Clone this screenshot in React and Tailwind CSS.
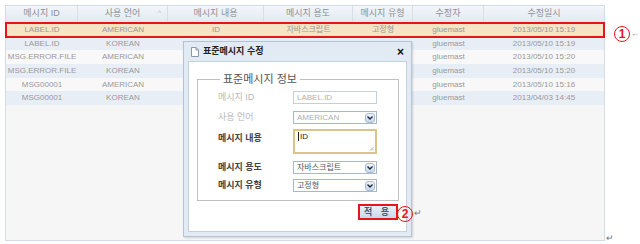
// App.jsx — 표준메시지 관리 화면 (그리드 + 수정 팝업)

import React from 'react';

const FONT = "font-['Liberation_Sans','Noto_Sans_CJK_KR',sans-serif]";

const cols = [
  { key: 'id', title: '메시지 ID', w: 'w-[72px]' },
  { key: 'lang', title: '사용 언어', w: 'w-[90px]', sort: true },
  { key: 'text', title: '메시지 내용', w: 'w-[96px]' },
  { key: 'use', title: '메시지 용도', w: 'w-[89px]' },
  { key: 'type', title: '메시지 유형', w: 'w-[60px]' },
  { key: 'user', title: '수정자', w: 'w-[71px]' },
  { key: 'date', title: '수정일시', w: 'w-[120px]' }
];

const rows = [
  { id: 'LABEL.ID', lang: 'AMERICAN', text: 'ID', use: '자바스크립트', type: '고정형', user: 'gluemast', date: '2013/05/10 15:19' },
  { id: 'LABEL.ID', lang: 'KOREAN', text: '', use: '', type: '', user: 'gluemast', date: '2013/05/10 15:19' },
  { id: 'MSG.ERROR.FILE', lang: 'AMERICAN', text: '', use: '', type: '', user: 'gluemast', date: '2013/05/10 15:20' },
  { id: 'MSG.ERROR.FILE', lang: 'KOREAN', text: '', use: '', type: '', user: 'gluemast', date: '2013/05/10 15:20' },
  { id: 'MSG00001', lang: 'AMERICAN', text: '', use: '', type: '', user: 'gluemast', date: '2013/05/10 15:16' },
  { id: 'MSG00001', lang: 'KOREAN', text: '', use: '', type: '', user: 'gluemast', date: '2013/04/03 14:45' }
];

function Circled({ n }) {
  return (
    <span className="flex items-center justify-center w-[16px] h-[16px] rounded-full border-[1.5px] border-[#e8141c] text-[#e8141c] text-[12px] font-bold leading-none">
      {n}
    </span>
  );
}

function SelectBox({ value, disabled }) {
  return (
    <div className="flex items-center justify-between w-[84px] h-[13px] border border-[#a9b8c8] bg-white pl-[3px] pr-[1px]">
      <span className={`text-[8px] leading-none ${disabled ? 'text-[#b0b0b0]' : 'text-[#555]'}`}>{value}</span>
      <span className="flex items-center justify-center w-[10px] h-[10px] rounded-[3px] bg-gradient-to-b from-[#eef4fb] to-[#c9d9ec] border border-[#a6bbd4]">
        <svg width="6" height="4" viewBox="0 0 6 4">
          <path d="M0.5 0.5 L3 3 L5.5 0.5" fill="none" stroke="#1d2b3a" strokeWidth="1.4" />
        </svg>
      </span>
    </div>
  );
}

function Dialog() {
  return (
    <div className="absolute left-[183px] top-[41px] w-[229px] h-[196px] flex flex-col bg-[#e2eaf3] border border-[#b3c4d6] px-[4px] pb-[4px] shadow-[1px_1px_2px_rgba(0,0,0,0.15)]">
      {/* 타이틀 바 */}
      <div className="flex items-center h-[19px] pl-[3px] pr-[3px]">
        <svg width="8" height="10" viewBox="0 0 8 10" className="mr-[4px]">
          <path d="M0.5 0.5 H5 L7.5 3 V9.5 H0.5 Z" fill="#fff" stroke="#8a98a8" />
          <path d="M5 0.5 V3 H7.5" fill="none" stroke="#8a98a8" />
        </svg>
        <span className="text-[9px] font-bold text-[#222]">표준메시지 수정</span>
        <span className="ml-auto text-[12px] font-bold leading-none text-[#111]">×</span>
      </div>

      {/* 본문 */}
      <div className="flex-1 flex flex-col bg-white border border-[#c4d1de] pl-[8px] pr-[7px] pt-[11px]">
        <fieldset className="border border-[#c0c0c0] pl-[20px] pr-[19px] pt-[6px] pb-[8px] m-0 min-w-0">
          <legend className="px-[3px] ml-[2px] text-[11px] leading-[12px] text-[#555]">표준메시지 정보</legend>
          <div className="flex flex-col">
            <div className="flex items-center h-[13px]">
              <span className="w-[75px] text-[9px] text-[#b8b8b8]">메시지 ID</span>
              <div className="w-[84px] h-[13px] border border-[#c6ced6] bg-white pl-[3px] flex items-center text-[8px] text-[#b0b0b0] leading-none">LABEL.ID</div>
            </div>
            <div className="flex items-center h-[13px] mt-[7px]">
              <span className="w-[75px] text-[9px] text-[#b8b8b8]">사용 언어</span>
              <SelectBox value="AMERICAN" disabled />
            </div>
            <div className="flex items-start mt-[5px]">
              <span className="w-[75px] text-[9px] font-semibold text-[#444] pt-[3px]">메시지 내용</span>
              <div className="relative w-[84px] h-[25px] border-2 border-[#d9c489] bg-white pl-[3px] pt-[2px] text-[8px] leading-none text-[#222]">
                <span className="border-l border-[#222] pl-[1px]">ID</span>
                <svg width="5" height="5" viewBox="0 0 5 5" className="absolute right-[1px] bottom-[1px]">
                  <path d="M1 4.5 L4.5 1 M3 4.5 L4.5 3" stroke="#999" strokeWidth="0.8" />
                </svg>
              </div>
            </div>
            <div className="flex items-center h-[13px] mt-[7px]">
              <span className="w-[75px] text-[9px] font-semibold text-[#444]">메시지 용도</span>
              <SelectBox value="자바스크립트" />
            </div>
            <div className="flex items-center h-[13px] mt-[5px]">
              <span className="w-[75px] text-[9px] font-semibold text-[#444]">메시지 유형</span>
              <SelectBox value="고정형" />
            </div>
          </div>
        </fieldset>

        <div className="flex justify-end mt-[3px] pr-[1px]">
          <button className="w-[40px] h-[16px] border-2 border-[#e8141c] p-0 flex items-center justify-center">
            <span className="w-[36px] h-[12px] flex items-center justify-center bg-gradient-to-b from-[#e9f1fa] to-[#c7d8ec] text-[9px] font-semibold text-[#4a5e74] tracking-[3px] leading-none">적 용</span>
          </button>
        </div>
      </div>
    </div>
  );
}

export default function App() {
  return (
    <div className={`relative w-[640px] h-[244px] bg-white overflow-hidden ${FONT}`}>
      {/* 그리드 */}
      <div className="ml-[5px] mt-[5px] w-[600px] h-[236px] border border-[#d3dce6] bg-[#f6f6f6]">
        <div className="flex h-[17px] bg-gradient-to-b from-[#f3f6fa] to-[#e2e9f1] border-b border-[#cdd7e2]">
          {cols.map((c) => (
            <div
              key={c.key}
              className={`${c.w} relative flex items-center justify-center border-r border-[#d6dee8] last:border-r-0 text-[9px] text-[#8a8f96]`}
            >
              {c.title}
              {c.sort && <span className="absolute right-[6px] top-[2px] text-[7px] text-[#bbb]">^</span>}
            </div>
          ))}
        </div>
        {rows.map((r, i) => (
          <div
            key={i}
            className={`flex h-[13.7px] ${
              i === 0
                ? 'bg-[#f6e4c4] outline-2 outline-[#e8141c] -outline-offset-1'
                : i % 2 === 1
                ? 'bg-[#e8eef6]'
                : 'bg-[#f8f8f8]'
            }`}
          >
            {cols.map((c) => (
              <div key={c.key} className={`${c.w} flex items-center justify-center text-[8px] text-[#999] whitespace-nowrap`}>
                {r[c.key]}
              </div>
            ))}
          </div>
        ))}
      </div>

      <Dialog />

      {/* 주석 표시 */}
      <div className="absolute left-[614px] top-[26px] flex items-center">
        <Circled n="1" />
        <span className="ml-[1px] text-[8px] text-[#777]">←</span>
      </div>
      <div className="absolute left-[397px] top-[206px] flex items-center">
        <Circled n="2" />
        <span className="ml-[1px] text-[9px] text-[#777]">↵</span>
      </div>
      <span className="absolute left-[606px] top-[232px] text-[9px] text-[#777]">↵</span>
    </div>
  );
}
